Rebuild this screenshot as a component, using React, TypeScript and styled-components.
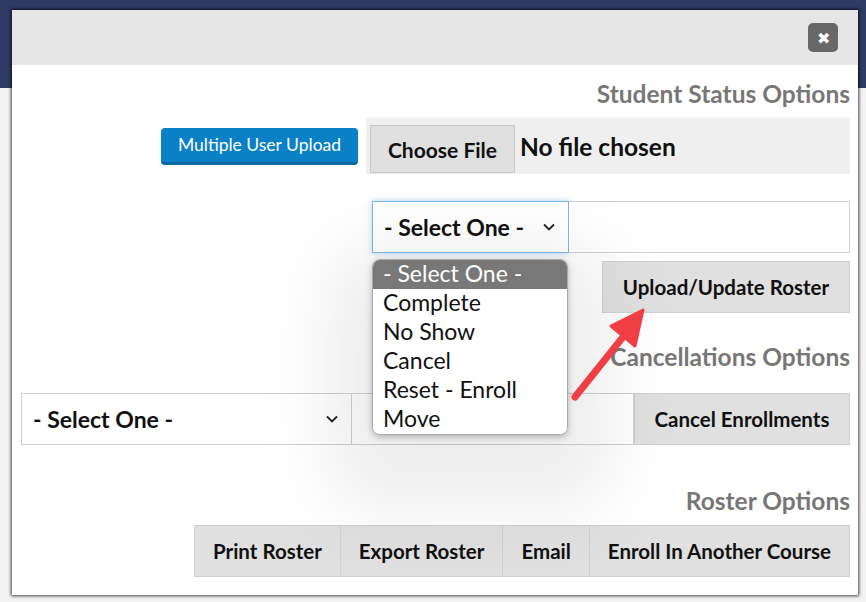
import styled, { createGlobalStyle } from "styled-components";

const Global = createGlobalStyle`
  html, body { margin: 0; padding: 0; }
  body {
    width: 866px; height: 602px; overflow: hidden;
    font-family: Lato, "Liberation Sans", sans-serif;
    background: linear-gradient(#2f3a64 0, #2f3a64 88px, #f4f4f4 88px);
  }
`;

const statusOptions = ["- Select One -", "Complete", "No Show", "Cancel", "Reset - Enroll", "Move"];

function Chevron({ size = 14 }: { size?: number }) {
  return (
    <svg width={size} height={size} viewBox="0 0 14 14">
      <path d="M2 4.5 L7 9.5 L12 4.5" fill="none" stroke="#222" strokeWidth="1.8" />
    </svg>
  );
}

function App() {
  return (
    <>
      <Global />
      <Page>
        <Dialog>
          <Header>
            <CloseButton>✖</CloseButton>
          </Header>
          <Body>
            <Heading>Student Status Options</Heading>
            <Row $gap={8}>
              <BlueButton>Multiple User Upload</BlueButton>
              <FileBox>
                <ChooseFile>Choose File</ChooseFile>
                <span>No file chosen</span>
              </FileBox>
            </Row>
            <Row $top={27}>
              <SelectBox $width={197} $focused>
                <span>- Select One -</span>
                <Chevron />
              </SelectBox>
              <TextBox $width={281} />
            </Row>
            <Row $top={8}>
              <GrayButton $width={248}>Upload/Update Roster</GrayButton>
            </Row>
            <Heading $top={30}>Cancellations Options</Heading>
            <Row $top={22}>
              <SelectBox $width={331}>
                <span>- Select One -</span>
                <Chevron />
              </SelectBox>
              <TextBox $width={282} />
              <GrayButton $width={216}>Cancel Enrollments</GrayButton>
            </Row>
            <Heading $top={42}>Roster Options</Heading>
            <Row $top={10}>
              <GroupButton>Print Roster</GroupButton>
              <GroupButton>Export Roster</GroupButton>
              <GroupButton>Email</GroupButton>
              <GroupButton>Enroll In Another Course</GroupButton>
            </Row>
          </Body>
        </Dialog>
        <Dropdown>
          {statusOptions.map((o, i) => (
            <Option key={o} $active={i === 0}>{o}</Option>
          ))}
        </Dropdown>
        <Arrow width="90" height="110" viewBox="0 0 90 110">
          <path d="M10 95 L62 30" stroke="#ef3f45" strokeWidth="7" strokeLinecap="round" />
          <path d="M78 8 L46 24 L70 44 Z" fill="#ef3f45" stroke="#ef3f45" strokeWidth="3" strokeLinejoin="round" />
        </Arrow>
      </Page>
    </>
  );
}

export default App;

const Page = styled.div`
  position: relative;
  width: 866px;
  height: 602px;
  padding-top: 10px;
  box-sizing: border-box;
`;

const Dialog = styled.div`
  margin-left: 12px;
  width: 846px;
  height: 585px;
  background: #fff;
  box-shadow: 0 0 3px 1px rgba(0, 0, 0, 0.75);
  display: flex;
  flex-direction: column;
`;

const Header = styled.div`
  height: 55px;
  background: #e6e6e6;
  display: flex;
  align-items: center;
  justify-content: flex-end;
  padding-right: 20px;
`;

const CloseButton = styled.div`
  width: 30px;
  height: 29px;
  border-radius: 5px;
  background: #686868;
  color: #fff;
  font-size: 16px;
  display: flex;
  align-items: center;
  justify-content: center;
`;

const Body = styled.div`
  display: flex;
  flex-direction: column;
  align-items: flex-end;
  padding: 15px 8px 0 0;
`;

const Heading = styled.div<{ $top?: number }>`
  margin-top: ${(p) => p.$top ?? 0}px;
  color: #777;
  font-size: 24.5px;
  font-weight: 700;
  line-height: 28px;
`;

const Row = styled.div<{ $top?: number; $gap?: number }>`
  margin-top: ${(p) => p.$top ?? 10}px;
  display: flex;
  align-items: center;
  gap: ${(p) => p.$gap ?? 0}px;
`;

const BlueButton = styled.div`
  height: 37px;
  width: 197px;
  border-radius: 4px;
  background: #0a80c6;
  border-bottom: 3px solid #0868a2;
  box-sizing: border-box;
  color: #fff;
  font-size: 17.5px;
  display: flex;
  align-items: center;
  justify-content: center;
`;

const FileBox = styled.div`
  width: 484px;
  height: 56px;
  background: #efefef;
  display: flex;
  align-items: center;
  gap: 5px;
  padding-left: 4px;
  box-sizing: border-box;
  font-size: 24.5px;
  font-weight: 700;
  color: #111;
`;

const ChooseFile = styled.div`
  width: 145px;
  height: 48px;
  margin-top: 6px;
  background: #e0e0e0;
  border: 1px solid #c8c8c8;
  box-sizing: border-box;
  font-size: 21px;
  display: flex;
  align-items: center;
  justify-content: center;
`;

const SelectBox = styled.div<{ $width: number; $focused?: boolean }>`
  width: ${(p) => p.$width}px;
  height: 52px;
  box-sizing: border-box;
  border: 1px solid ${(p) => (p.$focused ? "#7ab8f0" : "#d0d0d0")};
  box-shadow: ${(p) => (p.$focused ? "0 0 6px rgba(100,170,240,0.5)" : "none")};
  padding: 0 12px 0 11px;
  display: flex;
  align-items: center;
  justify-content: space-between;
  font-size: 23px;
  font-weight: 700;
  color: #111;
  background: #fff;
`;

const TextBox = styled.div<{ $width: number }>`
  width: ${(p) => p.$width}px;
  height: 52px;
  box-sizing: border-box;
  border: 1px solid #d0d0d0;
  border-left: none;
  background: #fff;
`;

const GrayButton = styled.div<{ $width: number }>`
  width: ${(p) => p.$width}px;
  height: 52px;
  box-sizing: border-box;
  background: #e0e0e0;
  border: 1px solid #d0d0d0;
  font-size: 20.5px;
  font-weight: 700;
  color: #111;
  display: flex;
  align-items: center;
  justify-content: center;
`;

const GroupButton = styled.div`
  height: 52px;
  padding: 0 18px;
  box-sizing: border-box;
  background: #e0e0e0;
  border: 1px solid #d0d0d0;
  border-left-width: 0;
  &:first-child { border-left-width: 1px; }
  font-size: 20.5px;
  font-weight: 700;
  color: #111;
  display: flex;
  align-items: center;
`;

const Dropdown = styled.div`
  position: absolute;
  left: 372px;
  top: 259px;
  width: 194px;
  background: #fff;
  border: 1px solid #aaa;
  border-radius: 8px;
  overflow: hidden;
  box-shadow: 0 30px 80px 40px rgba(0, 0, 0, 0.08), 0 2px 6px rgba(0, 0, 0, 0.25);
`;

const Option = styled.div<{ $active?: boolean }>`
  height: 29px;
  line-height: 27px;
  padding-left: 10px;
  font-size: 23px;
  color: ${(p) => (p.$active ? "#fff" : "#111")};
  background: ${(p) => (p.$active ? "#787878" : "#fff")};
`;

const Arrow = styled.svg`
  position: absolute;
  left: 565px;
  top: 302px;
`;
